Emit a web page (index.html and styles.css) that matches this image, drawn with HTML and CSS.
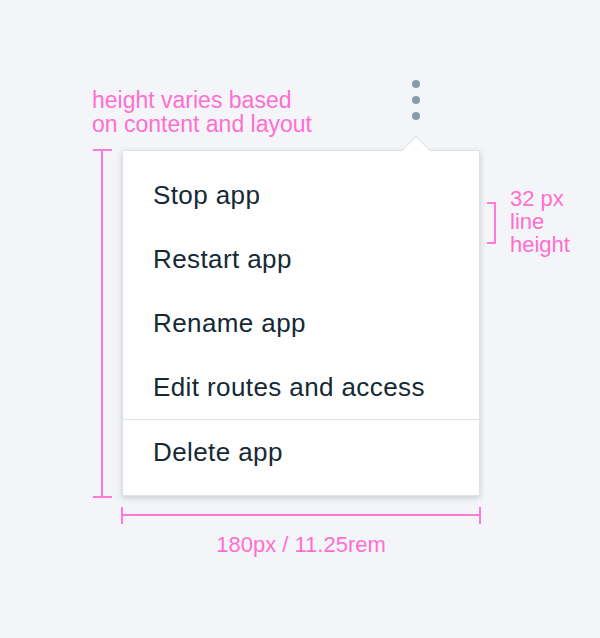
FILE: index.html
```html
<!DOCTYPE html>
<html>

<head>
<meta charset="utf-8">
<title>Overflow menu spec</title>
<link rel="stylesheet" href="styles.css">
</head>

<body>

<div class="canvas">
	<div class="trigger" aria-label="Open menu">
		<span class="dot"></span>
		<span class="dot"></span>
		<span class="dot"></span>
	</div>

	<div class="menu">
		<ul class="group">
			<li>Stop app</li>
			<li>Restart app</li>
			<li>Rename app</li>
			<li>Edit routes and access</li>
		</ul>
		<ul class="group danger">
			<li>Delete app</li>
		</ul>
	</div>

	<!-- spec annotations -->
	<div class="note note-height">height varies based<br>on content and layout</div>
	<div class="dim-v"></div>

	<div class="bracket"></div>
	<div class="note note-line">32 px<br>line<br>height</div>

	<div class="dim-h"></div>
	<div class="note note-width">180px / 11.25rem</div>
</div>

</body>

</html>
```

FILE: styles.css
```css
body {
	margin: 0;
	padding: 0;
	background-color: #f4f5f9;
	font-family: "Liberation Sans", Arial, sans-serif;
}

.canvas {
	position: relative;
	width: 600px;
	height: 638px;
	padding: 80px 0 0 122px;
	box-sizing: border-box;
}

/* kebab trigger */
.trigger {
	display: flex;
	flex-direction: column;
	gap: 8px;
	width: 8px;
	margin-left: 290px;
}

.dot {
	display: block;
	width: 8px;
	height: 8px;
	border-radius: 50%;
	background-color: #8c9ba5;
}

/* menu */
.menu {
	position: relative;
	width: 358px;
	box-sizing: border-box;
	margin-top: 30px;
	padding: 12px 0 11px;
	background-color: #fff;
	border: 1px solid #dfe3e6;
	box-shadow: 0 2px 6px rgba(21, 41, 53, 0.2);
}

.menu::before {
	content: "";
	position: absolute;
	top: -11px;
	left: 283px;
	width: 20px;
	height: 20px;
	background-color: #fff;
	border-top: 1px solid #dfe3e6;
	border-left: 1px solid #dfe3e6;
	box-sizing: border-box;
	transform: rotate(45deg);
}

.group {
	margin: 0;
	padding: 0;
	list-style: none;
}

.group.danger {
	border-top: 1px solid #dfe3e6;
}

.group li {
	height: 64px;
	line-height: 64px;
	padding: 0 30px;
	font-size: 26px;
	letter-spacing: 0.4px;
	color: #152935;
	white-space: nowrap;
}

/* annotations */
.note {
	position: absolute;
	font-size: 22px;
	line-height: 24px;
	color: #ff6fcf;
}

.note-height {
	left: 92px;
	top: 88px;
	font-size: 23px;
}

.note-line {
	left: 510px;
	top: 187px;
	line-height: 23px;
}

.note-width {
	left: 122px;
	top: 533px;
	width: 358px;
	text-align: center;
}

.dim-v {
	position: absolute;
	left: 93px;
	top: 149px;
	width: 19px;
	height: 345px;
	border-top: 2px solid #ff7ad9;
	border-bottom: 2px solid #ff7ad9;
}

.dim-v::after {
	content: "";
	position: absolute;
	left: 8px;
	top: 0;
	bottom: 0;
	width: 2px;
	background-color: #ff7ad9;
}

.dim-h {
	position: absolute;
	left: 121px;
	top: 507px;
	width: 356px;
	height: 17px;
	border-left: 2px solid #ff7ad9;
	border-right: 2px solid #ff7ad9;
}

.dim-h::after {
	content: "";
	position: absolute;
	left: 0;
	right: 0;
	top: 7px;
	height: 2px;
	background-color: #ff7ad9;
}

.bracket {
	position: absolute;
	left: 487px;
	top: 202px;
	width: 7px;
	height: 38px;
	border: 2px solid #ff7ad9;
	border-left: none;
}
```
